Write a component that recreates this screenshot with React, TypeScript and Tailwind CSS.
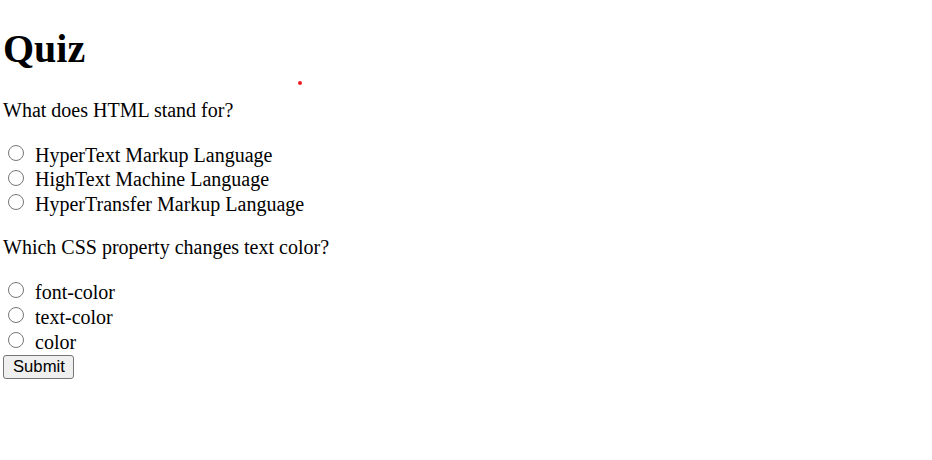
import React from "react";

const q1 = ["HyperText Markup Language", "HighText Machine Language", "HyperTransfer Markup Language"];
const q2 = ["font-color", "text-color", "color"];

function Option({ name, label }: { name: string; label: string }) {
  return (
    <label className="flex items-center h-[24.75px] leading-[24.75px]">
      <input type="radio" name={name} className="w-4 h-4 ml-[5px] mr-[11px] mb-[4px] shrink-0" />
      <span>{label}</span>
    </label>
  );
}

export default function App() {
  return (
    <div className="relative min-h-[460px] bg-white overflow-hidden">
      <div className="flow-root pl-[3px] font-['Liberation_Serif','Times_New_Roman',serif] text-[20px] text-black">
        <h1 className="text-[40px] font-bold mt-[25.5px] leading-[46px]">Quiz</h1>
        <form>
          <p className="mt-[27.5px] leading-[23px]">What does HTML stand for?</p>
          <div className="mt-[20.6px]">
            {q1.map((o) => (
              <Option key={o} name="q1" label={o} />
            ))}
          </div>
          <p className="mt-[19.6px] leading-[23px]">Which CSS property changes text color?</p>
          <div className="mt-[20.6px]">
            {q2.map((o) => (
              <Option key={o} name="q2" label={o} />
            ))}
          </div>
          <button
            type="submit"
            className="mt-[0.5px] block bg-[#efefef] border border-[#767676] rounded-[3px] pl-[9px] pr-[8px] h-[24px] text-[16.667px] leading-[19px] font-['Liberation_Sans',Arial,sans-serif] text-black"
          >
            Submit
          </button>
        </form>
      </div>
      <div className="absolute left-[298px] top-[81px] w-[4px] h-[4px] rounded-full bg-[#ee1c24]" />
    </div>
  );
}
